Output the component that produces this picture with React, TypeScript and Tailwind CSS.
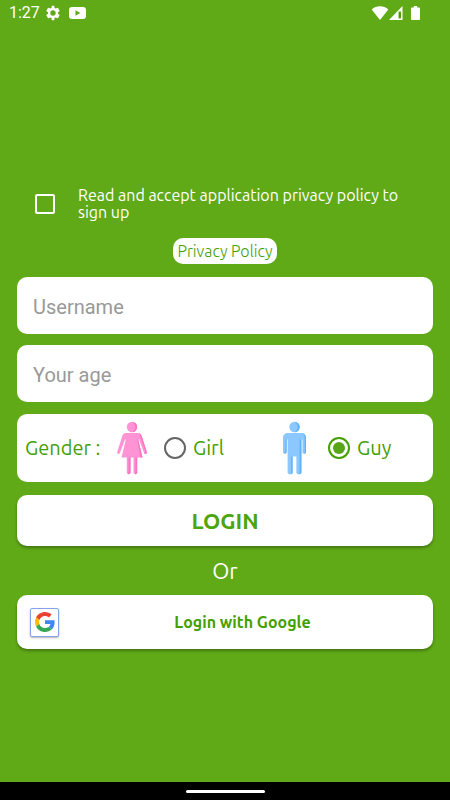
import { useState } from "react";

const ubuntu = "font-['Ubuntu','Noto_Sans',sans-serif]";
const roboto = "font-['Roboto',sans-serif]";

function StatusBar() {
  return (
    <header className={`flex h-[26px] items-center justify-between pl-[9px] pr-[30px] text-white ${roboto}`}>
      <div className="flex items-center">
        <span className="w-9 text-base leading-5">1:27</span>
        <svg viewBox="0 0 24 24" className="size-4" fill="currentColor" aria-hidden="true">
          <path d="M19.4 13a7.5 7.5 0 0 0 0-2l2.4-1.8a.6.6 0 0 0 .1-.7l-2.3-4a.6.6 0 0 0-.7-.2l-2.8 1.1a8 8 0 0 0-1.8-1L13.900 1.500a.6.6 0 0 0-.6-.5H10.700a.6.6 0 0 0-.6.5L9.700 4.400a8 8 0 0 0-1.800 1L5.100 4.300a.6.6 0 0 0-.7.2l-2.300 4a.6.6 0 0 0 .1.7L4.600 11a7.500 7.500 0 0 0 0 2l-2.400 1.800a.6.6 0 0 0-.1.7l2.300 4a.6.6 0 0 0 .7.2l2.800-1.100a8 8 0 0 0 1.800 1l.4 2.900a.6.6 0 0 0 .6.5h2.600a.6.6 0 0 0 .6-.5l.4-2.900a8 8 0 0 0 1.800-1l2.800 1.100a.6.6 0 0 0 .7-.2l2.300-4a.6.6 0 0 0-.1-.7ZM12 16a4 4 0 1 1 0-8 4 4 0 0 1 0 8Z" />
        </svg>
        <svg viewBox="0 0 17 12" className="ml-2 h-3 w-[17px]" aria-hidden="true">
          <rect width="17" height="12" rx="3" fill="currentColor" />
          <path d="M6.500 3.300v5.400L11.300 6z" fill="#60a917" />
        </svg>
      </div>
      <div className="flex items-center">
        <svg viewBox="0 0 18 14" className="h-3.5 w-[18px]" fill="currentColor" aria-hidden="true">
          <path d="M9 14 .7 3.500C3 1.300 5.800.2 9 .2s6 1.100 8.300 3.300z" />
        </svg>
        <svg viewBox="0 0 14 14" className="h-3.5 w-3.5" aria-hidden="true">
          <path d="M13.500 0v14H0zM9.500 5.500v7h2.500v-7z" fill="currentColor" fillRule="evenodd" />
          <path d="M10.300 6.500h1.200v5h-1.200z" fill="#3d9600" />
        </svg>
        <svg viewBox="0 0 9 14" className="ml-2 h-3.5 w-[9px]" fill="currentColor" aria-hidden="true">
          <path d="M2.800 0h3.400v1.500H8a1 1 0 0 1 1 1V13a1 1 0 0 1-1 1H1a1 1 0 0 1-1-1V2.500a1 1 0 0 1 1-1h1.800z" />
        </svg>
      </div>
    </header>
  );
}

function GirlFigure() {
  return (
    <svg viewBox="0 0 30 54" className="h-[54px] w-[30px]" aria-hidden="true">
      <g fill="#ff94d4">
        <circle cx="15" cy="6" r="5.200" />
        <path d="M9.500 12h11c2.200 0 3.500 1 4.200 3l5.100 16c.6 2-2 2.700-2.700 1L22 18.500h-.8l4.300 18.100h-5.300v15c0 2.200-3.700 2.200-3.700 0v-15h-3v15c0 2.200-3.700 2.200-3.700 0v-15H4.500L8.800 18.500H8L2.900 32c-.7 1.700-3.300 1-2.700-1l5.100-16c.7-2 2-3 4.200-3Z" />
      </g>
      <g fill="#ff72c5">
        <path d="M15 .8a5.200 5.200 0 0 1 0 10.400c4.300-1.800 4.300-8.400 0-10.400ZM21.500 12.200c1.700.3 2.600 1.300 3.200 2.800l5.100 16c.6 2-2 2.700-2.700 1 1.300 0 1.500-.7 1.100-2L23 14.200c-.3-.8-.8-1.500-1.500-2ZM21.200 18.500l4.300 18.100h-2L20.200 18Z" />
        <path d="M18.400 36.600h1.800v15c0 1-1 1.700-2 1.600zM11.700 36.600h1.800v15c0 1-1 1.700-2 1.600z" />
      </g>
    </svg>
  );
}

function GuyFigure() {
  return (
    <svg viewBox="0 0 23 54" className="h-[54px] w-[23px]" aria-hidden="true">
      <g fill="#8ac8ff">
        <circle cx="11.500" cy="6" r="5.200" />
        <path d="M5 12h13c3 0 5 2 5 5v14c0 2.400-3.600 2.400-3.600 0V18.500h-1v33c0 2.400-5 2.400-5 0V35.500h-3.800v16c0 2.400-5 2.400-5 0v-33h-1V31c0 2.400-3.600 2.400-3.600 0V17c0-3 2-5 5-5Z" />
      </g>
      <g fill="#5db3fc">
        <path d="M11.500.8a5.200 5.200 0 0 1 0 10.400c4.300-1.800 4.300-8.400 0-10.400ZM18.500 12.100c2.700.3 4.500 2.300 4.500 4.900v14c0 1.200-1 1.900-2 1.700.5-.3.700-.9.700-1.700V17c0-2.300-1-4-3.200-4.900Z" />
        <path d="M16.600 18.500h1.800v33c0 1.100-1.300 1.800-2.600 1.700.6-.4.8-1 .8-1.700zM8.200 35.500h1.400v16c0 1-.9 1.800-2.100 1.700.5-.4.7-1 .7-1.700zM2.400 18.500h1.200V31c0 1-.8 1.700-2 1.700.6-.4.8-1 .8-1.700z" />
      </g>
    </svg>
  );
}

function GoogleLogo() {
  return (
    <svg viewBox="0 0 48 48" className="size-5" aria-hidden="true">
      <path fill="#EA4335" d="M24 9.500c3.540 0 6.710 1.220 9.210 3.600l6.850-6.850C35.900 2.380 30.470 0 24 0 14.620 0 6.510 5.380 2.560 13.220l7.980 6.190C12.430 13.720 17.740 9.500 24 9.500z" />
      <path fill="#4285F4" d="M46.980 24.550c0-1.570-.15-3.090-.38-4.550H24v9.020h12.940c-.58 2.960-2.260 5.480-4.780 7.180l7.730 6c4.510-4.180 7.090-10.360 7.090-17.650z" />
      <path fill="#FBBC05" d="M10.530 28.590A14.500 14.500 0 0 1 9.770 24c0-1.600.27-3.140.76-4.590l-7.980-6.190A23.900 23.900 0 0 0 0 24c0 3.880.92 7.540 2.560 10.780z" />
      <path fill="#34A853" d="M24 48c6.480 0 11.930-2.130 15.890-5.810l-7.730-6c-2.150 1.450-4.920 2.300-8.160 2.300-6.260 0-11.570-4.220-13.470-9.910l-7.980 6.190C6.510 42.620 14.620 48 24 48z" />
    </svg>
  );
}

function GenderOption({ value, checked, onSelect }: { value: string; checked: boolean; onSelect: (v: string) => void }) {
  return (
    <label className="flex items-center gap-[7px]">
      <span className="grid size-[22px] place-items-center">
        <input
          type="radio"
          name="gender"
          value={value}
          checked={checked}
          onChange={() => onSelect(value)}
          className="peer col-start-1 row-start-1 size-[22px] appearance-none rounded-full border-2 border-[#666] checked:border-[#43a000]"
        />
        <span className="pointer-events-none col-start-1 row-start-1 hidden size-3 rounded-full bg-[#58a617] peer-checked:block" />
      </span>
      {value}
    </label>
  );
}

const field =
  `h-[57px] w-full rounded-[10px] bg-white px-4 pt-0.5 text-xl text-black outline-none placeholder:text-[#999] ${roboto}`;

export default function App() {
  const [gender, setGender] = useState("Guy");

  return (
    <div className={`flex min-h-screen flex-col bg-[#60a917] ${ubuntu}`}>
      <StatusBar />
      <main className="flex grow flex-col px-[17px] pt-[161px]">
        <label className="flex items-center pl-[18px] text-base leading-[17px] text-white">
          <input
            type="checkbox"
            className="mr-[23px] size-5 shrink-0 appearance-none rounded-xs border-2 border-white checked:bg-white"
          />
          <span className="max-w-[330px]">Read and accept application privacy policy to sign up</span>
        </label>
        <button
          type="button"
          className="mt-[17px] h-[26px] self-center rounded-[10px] bg-white px-1 text-base font-light text-[#43a000]"
        >
          Privacy Policy
        </button>

        <form className="mt-[13px] flex flex-col" onSubmit={(e) => e.preventDefault()}>
          <input className={field} type="text" placeholder="Username" aria-label="Username" />
          <input className={`mt-[11px] ${field}`} type="text" inputMode="numeric" placeholder="Your age" aria-label="Your age" />

          <fieldset aria-label="Gender" className="mt-3 rounded-[10px] bg-white">
            <div className="flex h-[68px] items-center pl-2 text-xl text-[#43a000]">
              <span className="w-[92px] whitespace-nowrap">Gender :</span>
              <span className="flex w-[166px] items-center gap-[17px]">
                <GirlFigure />
                <GenderOption value="Girl" checked={gender === "Girl"} onSelect={setGender} />
              </span>
              <span className="flex items-center gap-[22px]">
                <GuyFigure />
                <GenderOption value="Guy" checked={gender === "Guy"} onSelect={setGender} />
              </span>
            </div>
          </fieldset>

          <button
            type="submit"
            className="mt-[13px] h-[51px] rounded-[10px] bg-white text-[22px] font-bold text-[#4ba50c] shadow-[0_2px_3px_rgba(0,0,0,0.3)]"
          >
            LOGIN
          </button>
          <p className="my-2.5 text-center text-[22px] leading-[29px] text-white">Or</p>
          <button
            type="button"
            className="flex h-[54px] items-center rounded-[10px] bg-white px-[13px] text-base font-bold text-[#43a000] shadow-[0_2px_3px_rgba(0,0,0,0.3)]"
          >
            <span className="grid size-[29px] shrink-0 place-items-center rounded-xs border border-[#86a3ea] bg-white shadow-[0_1px_2px_rgba(0,0,0,0.3)]">
              <GoogleLogo />
            </span>
            <span className="grow pl-1.5 text-center">Login with Google</span>
          </button>
        </form>
      </main>
      <footer className="flex h-[18px] items-center justify-center bg-black">
        <div className="h-[3px] w-[79px] rounded-full bg-white" />
      </footer>
    </div>
  );
}
